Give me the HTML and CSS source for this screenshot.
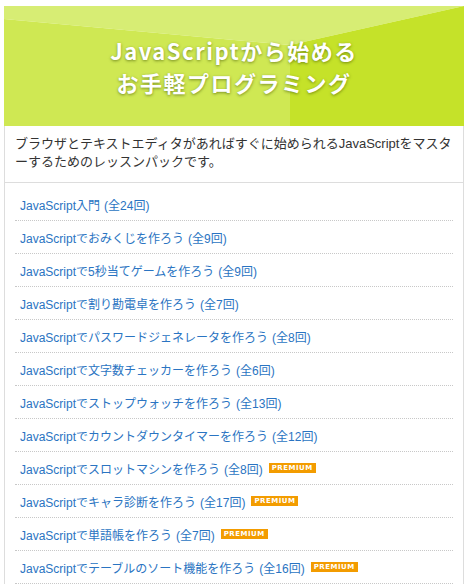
FILE: index.html
```html
<!DOCTYPE html>
<html lang="ja">
<head>
    <meta charset="UTF-8">
    <title>JavaScriptから始めるお手軽プログラミング</title>
    <link rel="stylesheet" href="styles.css">
</head>
<body>

    <div class="pack">
        <!-- Banner -->
        <div class="banner">
            <svg class="banner-bg" viewBox="0 0 460 120" preserveAspectRatio="none">
                <polygon points="0,0 460,0 286,39 0,13" fill="#d7ed74"/>
                <polygon points="0,13 286,39 286,120 0,120" fill="#cfe853"/>
                <polygon points="286,39 460,0 460,120 286,120" fill="#c5e229"/>
            </svg>
            <h1 class="banner-title">JavaScriptから始める<br>お手軽プログラミング</h1>
        </div>

        <!-- Description -->
        <p class="desc">ブラウザとテキストエディタがあればすぐに始められるJavaScriptをマスターするためのレッスンパックです。</p>

        <!-- Lessons -->
        <ul class="lessons">
            <li><a href="#">JavaScript入門</a> <span class="count">(全24回)</span></li>
            <li><a href="#">JavaScriptでおみくじを作ろう</a> <span class="count">(全9回)</span></li>
            <li><a href="#">JavaScriptで5秒当てゲームを作ろう</a> <span class="count">(全9回)</span></li>
            <li><a href="#">JavaScriptで割り勘電卓を作ろう</a> <span class="count">(全7回)</span></li>
            <li><a href="#">JavaScriptでパスワードジェネレータを作ろう</a> <span class="count">(全8回)</span></li>
            <li><a href="#">JavaScriptで文字数チェッカーを作ろう</a> <span class="count">(全6回)</span></li>
            <li><a href="#">JavaScriptでストップウォッチを作ろう</a> <span class="count">(全13回)</span></li>
            <li><a href="#">JavaScriptでカウントダウンタイマーを作ろう</a> <span class="count">(全12回)</span></li>
            <li><a href="#">JavaScriptでスロットマシンを作ろう</a> <span class="count">(全8回)</span> <span class="premium">PREMIUM</span></li>
            <li><a href="#">JavaScriptでキャラ診断を作ろう</a> <span class="count">(全17回)</span> <span class="premium">PREMIUM</span></li>
            <li><a href="#">JavaScriptで単語帳を作ろう</a> <span class="count">(全7回)</span> <span class="premium">PREMIUM</span></li>
            <li><a href="#">JavaScriptでテーブルのソート機能を作ろう</a> <span class="count">(全16回)</span> <span class="premium">PREMIUM</span></li>
        </ul>
    </div>

</body>
</html>
```

FILE: styles.css
```css
body {
    margin: 0;
    background: #fff;
    font-family: "Liberation Sans", "Noto Sans CJK JP", sans-serif;
}

/* Card around the whole pack */
.pack {
    width: 460px;
    margin: 6px 0 0 4px;
    box-sizing: border-box;
}

/* Green banner */
.banner {
    position: relative;
    height: 120px;
    display: flex;
    align-items: center;
    justify-content: center;
}

.banner-bg {
    position: absolute;
    top: 0;
    left: 0;
    width: 100%;
    height: 100%;
}

.banner-title {
    position: relative;
    margin: 0;
    color: #fff;
    font-family: "Noto Sans CJK JP", sans-serif;
    font-size: 22px;
    font-weight: 700;
    line-height: 32px;
    text-align: center;
    letter-spacing: 1.5px;
    text-shadow: 0 1px 3px rgba(60, 80, 0, 0.6);
}

/* Description under the banner */
.desc {
    margin: 0;
    padding: 9px 10px 11px 10px;
    border-left: 1px solid #ddd;
    border-right: 1px solid #ddd;
    border-bottom: 1px solid #ddd;
    font-size: 13px;
    line-height: 18px;
    color: #333;
}

/* Lesson list */
.lessons {
    list-style: none;
    margin: 0;
    padding: 5px 10px 0 10px;
    border-left: 1px solid #ddd;
    border-right: 1px solid #ddd;
}

.lessons li {
    height: 32px;
    padding-left: 5px;
    border-bottom: 1px dotted #c8c8c8;
    display: flex;
    align-items: center;
    gap: 4px;
    font-size: 12px;
    color: #2a74c2;
}

.lessons a {
    color: #2a74c2;
    text-decoration: none;
}

.premium {
    margin-left: 2px;
    padding: 0 3px;
    height: 10px;
    line-height: 10px;
    background: #f39c00;
    color: #fff;
    font-family: "DejaVu Sans", sans-serif;
    font-size: 7px;
    font-weight: 700;
    letter-spacing: 0.5px;
}
```
